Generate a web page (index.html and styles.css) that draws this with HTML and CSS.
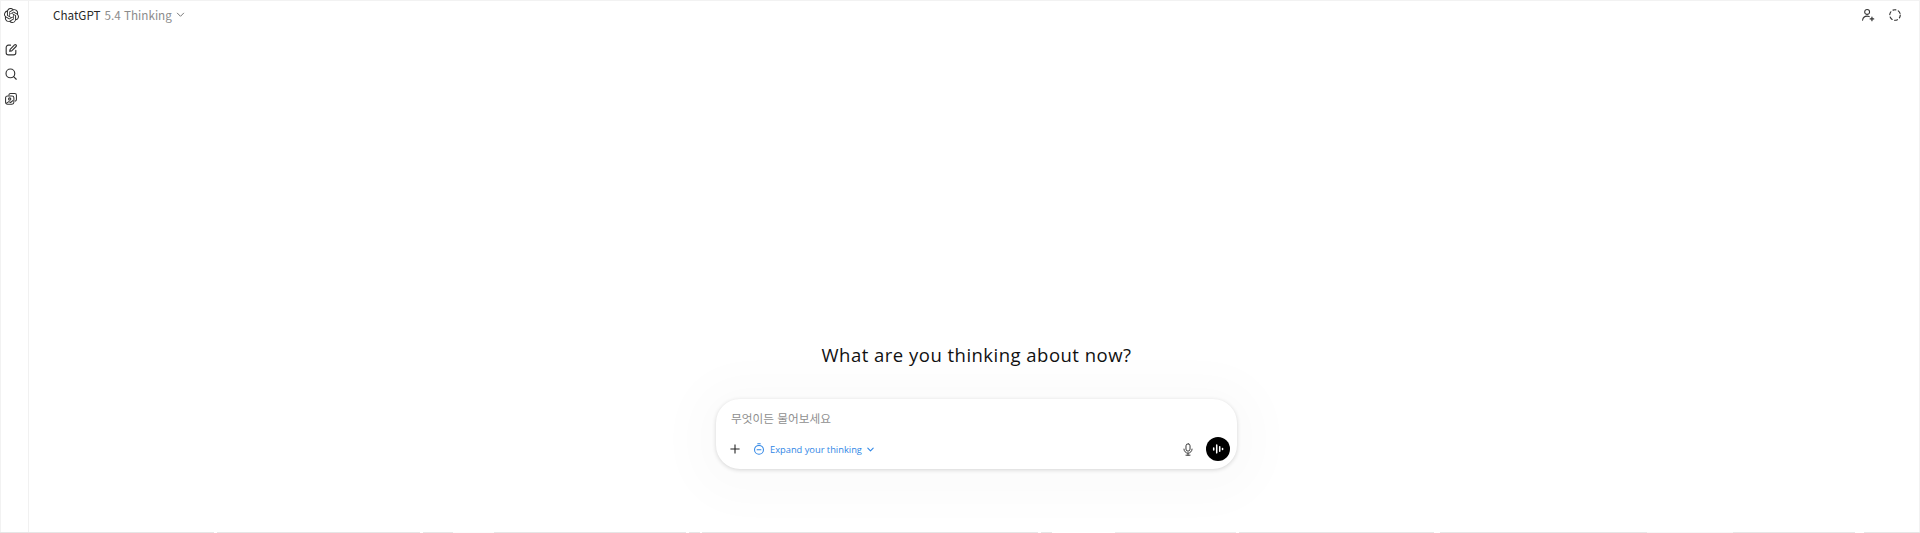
FILE: index.html
```html
<!DOCTYPE html>
<html lang="ko">
<head>
<meta charset="utf-8">
<title>ChatGPT</title>
<link rel="stylesheet" href="styles.css">
</head>
<body>
<div class="app">
  <aside class="rail">
    <svg class="logo" viewBox="0 0 24 24" fill="#2b2b2b"><path d="M22.2819 9.8211a5.9847 5.9847 0 0 0-.5157-4.9108 6.0462 6.0462 0 0 0-6.5098-2.9A6.0651 6.0651 0 0 0 4.9807 4.1818a5.9847 5.9847 0 0 0-3.9977 2.9 6.0462 6.0462 0 0 0 .7427 7.0966 5.98 5.98 0 0 0 .511 4.9107 6.051 6.051 0 0 0 6.5146 2.9001A5.9847 5.9847 0 0 0 13.2599 24a6.0557 6.0557 0 0 0 5.7718-4.2058 5.9894 5.9894 0 0 0 3.9977-2.9001 6.0557 6.0557 0 0 0-.7475-7.0729zm-9.022 12.6081a4.4755 4.4755 0 0 1-2.8764-1.0408l.1419-.0804 4.7783-2.7582a.7948.7948 0 0 0 .3927-.6813v-6.7369l2.02 1.1686a.071.071 0 0 1 .038.052v5.5826a4.504 4.504 0 0 1-4.4945 4.4944zm-9.6607-4.1254a4.4708 4.4708 0 0 1-.5346-3.0137l.142.0852 4.783 2.7582a.7712.7712 0 0 0 .7806 0l5.8428-3.3685v2.3324a.0804.0804 0 0 1-.0332.0615L9.74 19.9502a4.4992 4.4992 0 0 1-6.1408-1.6464zM2.3408 7.8956a4.485 4.485 0 0 1 2.3655-1.9728V11.6a.7664.7664 0 0 0 .3879.6765l5.8144 3.3543-2.0201 1.1685a.0757.0757 0 0 1-.071 0l-4.8303-2.7865A4.504 4.504 0 0 1 2.3408 7.872zm16.5963 3.8558L13.1038 8.364 15.1192 7.2a.0757.0757 0 0 1 .071 0l4.8303 2.7913a4.4944 4.4944 0 0 1-.6765 8.1042v-5.6772a.79.79 0 0 0-.407-.667zm2.0107-3.0231l-.142-.0852-4.7735-2.7818a.7759.7759 0 0 0-.7854 0L9.409 9.2297V6.8974a.0662.0662 0 0 1 .0284-.0615l4.8303-2.7866a4.4992 4.4992 0 0 1 6.6802 4.66zM8.3065 12.863l-2.02-1.1638a.0804.0804 0 0 1-.038-.0567V6.0742a4.4992 4.4992 0 0 1 7.3757-3.4537l-.142.0805L8.704 5.459a.7948.7948 0 0 0-.3927.6813zm1.0976-2.3654l2.602-1.4998 2.6069 1.4998v2.9994l-2.5974 1.4997-2.6067-1.4997Z"/></svg>
    <nav class="rail-nav">
      <svg class="ico" viewBox="0 0 16 16" fill="none" stroke="#333" stroke-width="1.3" stroke-linecap="round" stroke-linejoin="round"><path d="M7.5 2.5H5A2.5 2.5 0 0 0 2.5 5v6A2.5 2.5 0 0 0 5 13.5h6A2.5 2.5 0 0 0 13.5 11V8.5"/><path d="M6.5 9.5l.5-2.3 5-5a1.2 1.2 0 0 1 1.8 1.8l-5 5z"/></svg>
      <svg class="ico" viewBox="0 0 16 16" fill="none" stroke="#333" stroke-width="1.3" stroke-linecap="round"><circle cx="7.3" cy="7.3" r="5"/><path d="M11 11l3 3"/></svg>
      <svg class="ico" viewBox="0 0 16 16" fill="none" stroke="#333" stroke-width="1.2" stroke-linejoin="round"><path d="M5.5 4V3.5A2 2 0 0 1 7.500 1.800h4.700a2 2 0 0 1 2 2v4.700a2 2 0 0 1-1.700 2"/><rect x="1.800" y="4.500" width="9.500" height="9.500" rx="2.200"/><circle cx="6.500" cy="8" r="1.300"/><path d="M2.500 13l3-2 2 1 3-2.500"/></svg>
    </nav>
  </aside>
  <main class="main">
    <header class="top">
      <div class="model"><span class="model-name">ChatGPT</span><span class="model-sub">5.4 Thinking</span>
        <svg class="chev" viewBox="0 0 10 10" fill="none" stroke="#777" stroke-width="1.1" stroke-linecap="round" stroke-linejoin="round"><path d="M1.500 3.500L5 7l3.500-3.500"/></svg>
      </div>
      <div class="top-actions">
        <svg class="ico" viewBox="0 0 16 16" fill="none" stroke="#333" stroke-width="1.2" stroke-linecap="round"><circle cx="7" cy="4.500" r="2.800"/><path d="M1.800 14c.4-3 2.500-4.700 5.200-4.700 1 0 1.800.2 2.500.6"/><path d="M12.500 10.500v4M10.500 12.500h4" stroke-width="1.4"/></svg>
        <svg class="ico" viewBox="0 0 16 16" fill="none" stroke="#333" stroke-width="1.3" stroke-linecap="round"><circle cx="8" cy="8" r="6" stroke-dasharray="3.400 2.900"/></svg>
      </div>
    </header>
    <section class="center">
      <h1 class="title">What are you thinking about now?</h1>
      <form class="composer">
        <div class="prompt">무엇이든 물어보세요</div>
        <div class="tools">
          <svg class="plus" viewBox="0 0 12 12" fill="none" stroke="#222" stroke-width="1.3"><path d="M6 .5v11M.5 6h11"/></svg>
          <div class="mode">
            <svg class="timer" viewBox="0 0 14 14" fill="none" stroke="#2f86e6" stroke-width="1.2" stroke-linecap="round"><circle cx="7" cy="8" r="5.200"/><path d="M5.500 1h3M4.700 8h4.600"/></svg>
            <span>Expand your thinking</span>
            <svg class="chev-s" viewBox="0 0 10 10" fill="none" stroke="#2f86e6" stroke-width="1.2" stroke-linecap="round" stroke-linejoin="round"><path d="M2 3.500L5 6.500l3-3"/></svg>
          </div>
          <svg class="mic" viewBox="0 0 14 16" fill="none" stroke="#333" stroke-width="1.2" stroke-linecap="round"><rect x="4.500" y="1" width="5" height="9" rx="2.500"/><path d="M2 7.500a5 5 0 0 0 10 0M7 12.500V15M4.500 15h5"/></svg>
          <div class="voice">
            <svg viewBox="0 0 14 14" fill="none" stroke="#fff" stroke-width="1.8" stroke-linecap="round"><path d="M2 5.800v2.400M5.500 2.500v9M9 4.500v5M12.300 6.300v1.400"/></svg>
          </div>
        </div>
      </form>
    </section>
  </main>
</div>
<div class="edge"></div>
</body>
</html>
```
FILE: styles.css
```css
* { box-sizing: border-box; }
html, body { margin: 0; height: 100%; background: #fff; overflow: hidden; }
body { font-family: "Noto Sans CJK KR", "Open Sans", sans-serif; color: #1a1a1a; }
.app {
  display: flex; height: 532px;
  border: 1px solid #f2f2f2; border-bottom: 0;
}
.edge {
  height: 1px;
  background: linear-gradient(90deg,
    #e6e6e6 0 214px, #fff 214px 217px, #e6e6e6 217px 420px, #fff 420px 423px,
    #e6e6e6 423px 453px, #fbfbfb 453px 494px, #e6e6e6 494px 686px, #fff 686px 689px,
    #e6e6e6 689px 700px, #fff 700px 702px, #e6e6e6 702px 1038px, #fff 1038px 1041px,
    #e6e6e6 1041px 1052px, #fff 1052px 1115px, #ececec 1115px 1236px, #fff 1236px 1239px,
    #e6e6e6 1239px 1434px, #fff 1434px 1440px, #e6e6e6 1440px 1647px, #f6f6f6 1647px 1733px,
    #e6e6e6 1733px 1855px, #fff 1855px 1864px, #e6e6e6 1864px);
}
.rail {
  width: 28px; flex: none; border-right: 1px solid #f1f1f1;
  display: flex; flex-direction: column; align-items: flex-start; padding: 6.5px 0 0 3px;
}
.logo { width: 15px; height: 15px; display: block; }
.rail-nav { display: flex; flex-direction: column; gap: 10.5px; margin-top: 20px; }
.ico { width: 14px; height: 14px; display: block; }
.main { flex: 1; display: flex; flex-direction: column; min-width: 0; }
.top {
  height: 28px; flex: none; display: flex; align-items: center; justify-content: space-between;
  padding: 0 17px 0 24px;
}
.model { display: flex; align-items: center; font-size: 11.7px; margin-bottom: 2px; }
.model-name { color: #2a2a2a; }
.model-sub { color: #8c8c8c; margin-left: 4px; }
.chev { width: 9px; height: 9px; margin-left: 4px; }
.top-actions { display: flex; gap: 13px; }
.center {
  flex: 1; display: flex; flex-direction: column; align-items: center; justify-content: flex-end;
  padding: 0 0 63px 5px;
}
.title {
  margin: 0 0 29px; font-size: 18.5px; font-weight: 400; line-height: 30px; letter-spacing: .48px;
  color: #111; font-family: "Open Sans", sans-serif;
}
.composer {
  width: 521px; height: 70px; background: #fff; border-radius: 24px;
  box-shadow: 0 1px 4px rgba(0,0,0,.16), 0 5px 40px 30px rgba(0,0,0,.014);
  padding: 11px 7px 8px 14px; display: flex; flex-direction: column; justify-content: space-between;
}
.prompt { font-size: 11.7px; line-height: 16px; color: #8f8f8f; margin-left: 1px; }
.tools { display: flex; align-items: center; }
.plus { width: 10px; height: 10px; flex: none; }
.mode { display: flex; align-items: center; margin-left: 13px; font-family: "Open Sans", sans-serif; font-size: 9.3px; color: #2f86e6; flex: 1; }
.timer { width: 12px; height: 12px; margin-right: 5px; }
.chev-s { width: 9px; height: 9px; margin-left: 4.5px; }
.mic { width: 12px; height: 13px; margin-right: 12px; }
.voice { width: 24px; height: 24px; border-radius: 50%; background: #000; display: flex; align-items: center; justify-content: center; }
.voice svg { width: 12px; height: 12px; }
```
